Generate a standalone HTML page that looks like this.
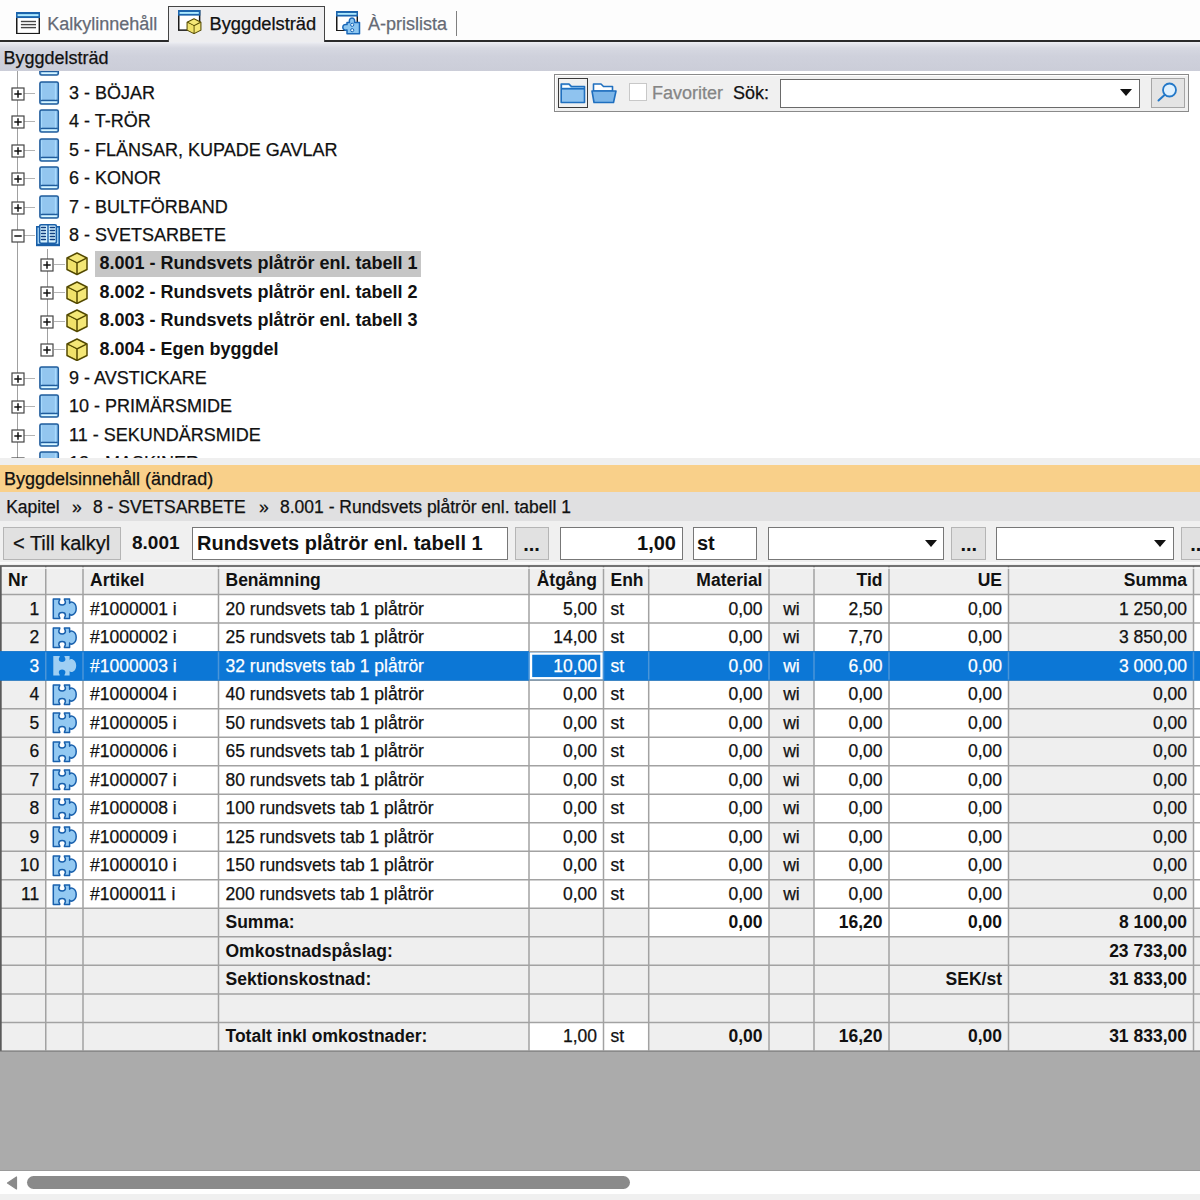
<!DOCTYPE html><html><head><meta charset="utf-8"><style>
html,body{margin:0;padding:0}
body{width:1200px;height:1200px;overflow:hidden;position:relative;background:#fff;font-family:"Liberation Sans",sans-serif;font-size:18px;color:#111}
.t{position:absolute;white-space:pre;line-height:20px;-webkit-text-stroke:0.25px currentColor}
</style></head><body>
<div style="position:absolute;box-sizing:border-box;left:0px;top:0px;width:1200px;height:41px;background:#fdfdfd"></div>
<div style="position:absolute;box-sizing:border-box;left:0px;top:40px;width:1200px;height:1.6px;background:#2a2a2a"></div>
<div style="position:absolute;box-sizing:border-box;left:168px;top:6px;width:157px;height:36px;background:#eeeef0;border:1.5px solid #444;border-bottom:none"></div>
<svg style="position:absolute;left:16.35px;top:12px" width="24.1" height="22.4" viewBox="0 0 24.1 22.4">
<rect x="0.75" y="0.75" width="22.6" height="20.9" fill="#fff" stroke="#1a1a1a" stroke-width="1.5"/>
<rect x="0" y="0" width="24.1" height="6.05" fill="#1b64ad"/>
<rect x="1.6" y="2.13" width="20.900000000000002" height="2.02" fill="#aeeaff"/>
</svg>
<svg style="position:absolute;left:0;top:0" width="60" height="40"><g stroke="#454545" stroke-width="1.4"><line x1="20.9" y1="21.5" x2="36" y2="21.5"/><line x1="20.9" y1="24.6" x2="36" y2="24.6"/><line x1="20.9" y1="27.6" x2="36" y2="27.6"/></g></svg>
<div class="t" style="left:47.2px;top:13.7px;color:#656a75">Kalkylinnehåll</div>
<svg style="position:absolute;left:178.35px;top:10.35px" width="22.4" height="20.9" viewBox="0 0 22.4 20.9">
<rect x="0.75" y="0.75" width="20.9" height="19.4" fill="#fff" stroke="#1a1a1a" stroke-width="1.5"/>
<rect x="0" y="0" width="22.4" height="5.64" fill="#1b64ad"/>
<rect x="1.6" y="1.99" width="19.2" height="1.88" fill="#aeeaff"/>
</svg>
<svg style="position:absolute;left:186.2px;top:17.8px" width="16" height="16.3" viewBox="0 0 22 23.5">
<path d="M11 1 L21 6 V17.5 L11 22.5 L1 17.5 V6 Z" fill="#f4e777" stroke="#544a00" stroke-width="1.5" stroke-linejoin="round"/>
<path d="M1.5 6.2 L11 11 L20.5 6.2 M11 11 V22" fill="none" stroke="#544a00" stroke-width="1.5"/>
<path d="M2.8 7.5 L10 11.2 V20.5 L2.8 17 Z" fill="#f1e26a"/>
</svg>
<div class="t" style="left:209.5px;top:13.7px;color:#111;font-size:18.3px">Byggdelsträd</div>
<svg style="position:absolute;left:336.2px;top:10.8px" width="22.1" height="20.5" viewBox="0 0 22.1 20.5">
<rect x="0.75" y="0.75" width="20.6" height="19.0" fill="#fff" stroke="#1a1a1a" stroke-width="1.5"/>
<rect x="0" y="0" width="22.1" height="5.54" fill="#1b64ad"/>
<rect x="1.6" y="1.95" width="18.900000000000002" height="1.84" fill="#aeeaff"/>
</svg>
<svg style="position:absolute;left:341px;top:16px" width="20" height="19" viewBox="0 0 20 19">
<path d="M6 6.5 H8.5 C8 4.5 8.5 2 11 2 C13.5 2 14 4.5 13.5 6.5 H18.5 V17.8 H6 V14 C3.5 14.5 1.8 13.5 1.8 11.3 C1.8 9 3.5 8 6 8.6 Z" fill="#8cc6f0" stroke="#1a68b8" stroke-width="1.5" stroke-linejoin="round"/>
<circle cx="11.2" cy="8.8" r="1.6" fill="#e6f5ff" stroke="#1a68b8" stroke-width="1"/>
<circle cx="11.2" cy="14.2" r="1.6" fill="#e6f5ff" stroke="#1a68b8" stroke-width="1"/>
</svg>
<div class="t" style="left:368px;top:13.7px;color:#656a75">À-prislista</div>
<div style="position:absolute;box-sizing:border-box;left:455.8px;top:10.6px;width:1.3px;height:25px;background:#808080"></div>
<div style="position:absolute;box-sizing:border-box;left:0px;top:41.6px;width:1200px;height:29.4px;background:linear-gradient(#eeeff3 0px,#e2e3ea 2.5px,#d6d8e1 6px,#cfd1dc 14px,#cbcdd8 29.4px)"></div>
<div class="t" style="left:3.5px;top:47.5px;color:#111">Byggdelsträd</div>
<div style="position:absolute;left:0;top:71px;width:1200px;height:386.5px;overflow:hidden;background:#fff">
<div style="position:absolute;box-sizing:border-box;left:16.6px;top:0px;width:1.4px;height:400px;background:#a0a0a0"></div>
<div style="position:absolute;box-sizing:border-box;left:46.6px;top:178.25px;width:1.4px;height:100.5px;background:#a0a0a0"></div>
<div style="position:absolute;box-sizing:border-box;left:94.75px;top:179.75px;width:326.25px;height:26px;background:#c6c6c6"></div>
<svg style="position:absolute;left:38.5px;top:-18.75px" width="21" height="25" viewBox="0 0 21 25">
<rect x="0.9" y="0.9" width="18.4" height="22.2" rx="1.6" fill="#93c6ef" stroke="#1f5c9c" stroke-width="1.5"/>
<line x1="1.5" y1="19.4" x2="18.8" y2="19.4" stroke="#1f5c9c" stroke-width="1.4"/>
<line x1="2.6" y1="21.3" x2="17.8" y2="21.3" stroke="#d8f6ff" stroke-width="1.5"/>
<line x1="16.4" y1="2.4" x2="16.4" y2="18.6" stroke="#a9dcff" stroke-width="1.1"/>
<line x1="2.6" y1="2.4" x2="2.6" y2="18.6" stroke="#a9dcff" stroke-width="1"/>
</svg>
<div class="t" style="left:69px;top:-16.95px;color:#111">2 - </div>
<div style="position:absolute;box-sizing:border-box;left:24px;top:21.85px;width:10.5px;height:1px;background:#b4b4b4"></div>
<svg style="position:absolute;left:9.5px;top:14.5px" width="16" height="16" viewBox="0 0 16 16">
<rect x="2" y="2" width="12" height="12" fill="#fff" stroke="#454545" stroke-width="1.2"/>
<line x1="4.3" y1="8" x2="11.7" y2="8" stroke="#111" stroke-width="1.5"/><line x1="8" y1="4.3" x2="8" y2="11.7" stroke="#111" stroke-width="1.5"/>
</svg>
<svg style="position:absolute;left:38.5px;top:9.75px" width="21" height="25" viewBox="0 0 21 25">
<rect x="0.9" y="0.9" width="18.4" height="22.2" rx="1.6" fill="#93c6ef" stroke="#1f5c9c" stroke-width="1.5"/>
<line x1="1.5" y1="19.4" x2="18.8" y2="19.4" stroke="#1f5c9c" stroke-width="1.4"/>
<line x1="2.6" y1="21.3" x2="17.8" y2="21.3" stroke="#d8f6ff" stroke-width="1.5"/>
<line x1="16.4" y1="2.4" x2="16.4" y2="18.6" stroke="#a9dcff" stroke-width="1.1"/>
<line x1="2.6" y1="2.4" x2="2.6" y2="18.6" stroke="#a9dcff" stroke-width="1"/>
</svg>
<div class="t" style="left:69px;top:11.55px;color:#111">3 - BÖJAR</div>
<div style="position:absolute;box-sizing:border-box;left:24px;top:50.35px;width:10.5px;height:1px;background:#b4b4b4"></div>
<svg style="position:absolute;left:9.5px;top:43.0px" width="16" height="16" viewBox="0 0 16 16">
<rect x="2" y="2" width="12" height="12" fill="#fff" stroke="#454545" stroke-width="1.2"/>
<line x1="4.3" y1="8" x2="11.7" y2="8" stroke="#111" stroke-width="1.5"/><line x1="8" y1="4.3" x2="8" y2="11.7" stroke="#111" stroke-width="1.5"/>
</svg>
<svg style="position:absolute;left:38.5px;top:38.25px" width="21" height="25" viewBox="0 0 21 25">
<rect x="0.9" y="0.9" width="18.4" height="22.2" rx="1.6" fill="#93c6ef" stroke="#1f5c9c" stroke-width="1.5"/>
<line x1="1.5" y1="19.4" x2="18.8" y2="19.4" stroke="#1f5c9c" stroke-width="1.4"/>
<line x1="2.6" y1="21.3" x2="17.8" y2="21.3" stroke="#d8f6ff" stroke-width="1.5"/>
<line x1="16.4" y1="2.4" x2="16.4" y2="18.6" stroke="#a9dcff" stroke-width="1.1"/>
<line x1="2.6" y1="2.4" x2="2.6" y2="18.6" stroke="#a9dcff" stroke-width="1"/>
</svg>
<div class="t" style="left:69px;top:40.05px;color:#111">4 - T-RÖR</div>
<div style="position:absolute;box-sizing:border-box;left:24px;top:78.85px;width:10.5px;height:1px;background:#b4b4b4"></div>
<svg style="position:absolute;left:9.5px;top:71.5px" width="16" height="16" viewBox="0 0 16 16">
<rect x="2" y="2" width="12" height="12" fill="#fff" stroke="#454545" stroke-width="1.2"/>
<line x1="4.3" y1="8" x2="11.7" y2="8" stroke="#111" stroke-width="1.5"/><line x1="8" y1="4.3" x2="8" y2="11.7" stroke="#111" stroke-width="1.5"/>
</svg>
<svg style="position:absolute;left:38.5px;top:66.75px" width="21" height="25" viewBox="0 0 21 25">
<rect x="0.9" y="0.9" width="18.4" height="22.2" rx="1.6" fill="#93c6ef" stroke="#1f5c9c" stroke-width="1.5"/>
<line x1="1.5" y1="19.4" x2="18.8" y2="19.4" stroke="#1f5c9c" stroke-width="1.4"/>
<line x1="2.6" y1="21.3" x2="17.8" y2="21.3" stroke="#d8f6ff" stroke-width="1.5"/>
<line x1="16.4" y1="2.4" x2="16.4" y2="18.6" stroke="#a9dcff" stroke-width="1.1"/>
<line x1="2.6" y1="2.4" x2="2.6" y2="18.6" stroke="#a9dcff" stroke-width="1"/>
</svg>
<div class="t" style="left:69px;top:68.55px;color:#111">5 - FLÄNSAR, KUPADE GAVLAR</div>
<div style="position:absolute;box-sizing:border-box;left:24px;top:107.35px;width:10.5px;height:1px;background:#b4b4b4"></div>
<svg style="position:absolute;left:9.5px;top:100.0px" width="16" height="16" viewBox="0 0 16 16">
<rect x="2" y="2" width="12" height="12" fill="#fff" stroke="#454545" stroke-width="1.2"/>
<line x1="4.3" y1="8" x2="11.7" y2="8" stroke="#111" stroke-width="1.5"/><line x1="8" y1="4.3" x2="8" y2="11.7" stroke="#111" stroke-width="1.5"/>
</svg>
<svg style="position:absolute;left:38.5px;top:95.25px" width="21" height="25" viewBox="0 0 21 25">
<rect x="0.9" y="0.9" width="18.4" height="22.2" rx="1.6" fill="#93c6ef" stroke="#1f5c9c" stroke-width="1.5"/>
<line x1="1.5" y1="19.4" x2="18.8" y2="19.4" stroke="#1f5c9c" stroke-width="1.4"/>
<line x1="2.6" y1="21.3" x2="17.8" y2="21.3" stroke="#d8f6ff" stroke-width="1.5"/>
<line x1="16.4" y1="2.4" x2="16.4" y2="18.6" stroke="#a9dcff" stroke-width="1.1"/>
<line x1="2.6" y1="2.4" x2="2.6" y2="18.6" stroke="#a9dcff" stroke-width="1"/>
</svg>
<div class="t" style="left:69px;top:97.05px;color:#111">6 - KONOR</div>
<div style="position:absolute;box-sizing:border-box;left:24px;top:135.85px;width:10.5px;height:1px;background:#b4b4b4"></div>
<svg style="position:absolute;left:9.5px;top:128.5px" width="16" height="16" viewBox="0 0 16 16">
<rect x="2" y="2" width="12" height="12" fill="#fff" stroke="#454545" stroke-width="1.2"/>
<line x1="4.3" y1="8" x2="11.7" y2="8" stroke="#111" stroke-width="1.5"/><line x1="8" y1="4.3" x2="8" y2="11.7" stroke="#111" stroke-width="1.5"/>
</svg>
<svg style="position:absolute;left:38.5px;top:123.75px" width="21" height="25" viewBox="0 0 21 25">
<rect x="0.9" y="0.9" width="18.4" height="22.2" rx="1.6" fill="#93c6ef" stroke="#1f5c9c" stroke-width="1.5"/>
<line x1="1.5" y1="19.4" x2="18.8" y2="19.4" stroke="#1f5c9c" stroke-width="1.4"/>
<line x1="2.6" y1="21.3" x2="17.8" y2="21.3" stroke="#d8f6ff" stroke-width="1.5"/>
<line x1="16.4" y1="2.4" x2="16.4" y2="18.6" stroke="#a9dcff" stroke-width="1.1"/>
<line x1="2.6" y1="2.4" x2="2.6" y2="18.6" stroke="#a9dcff" stroke-width="1"/>
</svg>
<div class="t" style="left:69px;top:125.55px;color:#111">7 - BULTFÖRBAND</div>
<div style="position:absolute;box-sizing:border-box;left:24px;top:164.35px;width:10.5px;height:1px;background:#b4b4b4"></div>
<svg style="position:absolute;left:9.5px;top:157.0px" width="16" height="16" viewBox="0 0 16 16">
<rect x="2" y="2" width="12" height="12" fill="#fff" stroke="#454545" stroke-width="1.2"/>
<line x1="4.3" y1="8" x2="11.7" y2="8" stroke="#111" stroke-width="1.5"/>
</svg>
<svg style="position:absolute;left:36px;top:152.75px" width="24" height="23" viewBox="0 0 24 23">
<rect x="0.8" y="2.8" width="22.4" height="18.6" fill="#b8e4ff" stroke="#1a5fa8" stroke-width="1.6"/>
<rect x="3.6" y="0.8" width="16.8" height="18.4" rx="1.5" fill="#d6f2ff" stroke="#1a5fa8" stroke-width="1.6"/>
<line x1="12" y1="1" x2="12" y2="21" stroke="#1a5fa8" stroke-width="1.4"/>
<line x1="0.8" y1="20.6" x2="23.2" y2="20.6" stroke="#1a5fa8" stroke-width="1.6"/>
<g stroke="#123f80" stroke-width="1.5" stroke-linecap="round"><line x1="5.6" y1="3.4" x2="9.4" y2="3.4"/><line x1="14.4" y1="3.4" x2="18.4" y2="3.4"/><line x1="5.6" y1="6.5" x2="9.4" y2="6.5"/><line x1="14.4" y1="6.5" x2="18.4" y2="6.5"/><line x1="5.6" y1="9.5" x2="9.4" y2="9.5"/><line x1="14.4" y1="9.5" x2="18.4" y2="9.5"/><line x1="5.6" y1="12.5" x2="9.4" y2="12.5"/><line x1="14.4" y1="12.5" x2="18.4" y2="12.5"/><line x1="5.6" y1="15.5" x2="9.4" y2="15.5"/><line x1="14.4" y1="15.5" x2="18.4" y2="15.5"/></g>
</svg>
<div class="t" style="left:69px;top:154.05px;color:#111">8 - SVETSARBETE</div>
<div style="position:absolute;box-sizing:border-box;left:54px;top:192.85px;width:11px;height:1px;background:#b4b4b4"></div>
<svg style="position:absolute;left:39.2px;top:185.5px" width="16" height="16" viewBox="0 0 16 16">
<rect x="2" y="2" width="12" height="12" fill="#fff" stroke="#454545" stroke-width="1.2"/>
<line x1="4.3" y1="8" x2="11.7" y2="8" stroke="#111" stroke-width="1.5"/><line x1="8" y1="4.3" x2="8" y2="11.7" stroke="#111" stroke-width="1.5"/>
</svg>
<svg style="position:absolute;left:66px;top:181.25px" width="22" height="23.5" viewBox="0 0 22 23.5">
<path d="M11 1 L21 6 V17.5 L11 22.5 L1 17.5 V6 Z" fill="#f4e777" stroke="#544a00" stroke-width="1.5" stroke-linejoin="round"/>
<path d="M1.5 6.2 L11 11 L20.5 6.2 M11 11 V22" fill="none" stroke="#544a00" stroke-width="1.5"/>
<path d="M2.8 7.5 L10 11.2 V20.5 L2.8 17 Z" fill="#f1e26a"/>
</svg>
<div class="t" style="left:99.5px;top:182.35px;color:#111;font-weight:bold;-webkit-text-stroke:0">8.001 - Rundsvets plåtrör enl. tabell 1</div>
<div style="position:absolute;box-sizing:border-box;left:54px;top:221.35px;width:11px;height:1px;background:#b4b4b4"></div>
<svg style="position:absolute;left:39.2px;top:214.0px" width="16" height="16" viewBox="0 0 16 16">
<rect x="2" y="2" width="12" height="12" fill="#fff" stroke="#454545" stroke-width="1.2"/>
<line x1="4.3" y1="8" x2="11.7" y2="8" stroke="#111" stroke-width="1.5"/><line x1="8" y1="4.3" x2="8" y2="11.7" stroke="#111" stroke-width="1.5"/>
</svg>
<svg style="position:absolute;left:66px;top:209.75px" width="22" height="23.5" viewBox="0 0 22 23.5">
<path d="M11 1 L21 6 V17.5 L11 22.5 L1 17.5 V6 Z" fill="#f4e777" stroke="#544a00" stroke-width="1.5" stroke-linejoin="round"/>
<path d="M1.5 6.2 L11 11 L20.5 6.2 M11 11 V22" fill="none" stroke="#544a00" stroke-width="1.5"/>
<path d="M2.8 7.5 L10 11.2 V20.5 L2.8 17 Z" fill="#f1e26a"/>
</svg>
<div class="t" style="left:99.5px;top:210.85px;color:#111;font-weight:bold;-webkit-text-stroke:0">8.002 - Rundsvets plåtrör enl. tabell 2</div>
<div style="position:absolute;box-sizing:border-box;left:54px;top:249.85px;width:11px;height:1px;background:#b4b4b4"></div>
<svg style="position:absolute;left:39.2px;top:242.5px" width="16" height="16" viewBox="0 0 16 16">
<rect x="2" y="2" width="12" height="12" fill="#fff" stroke="#454545" stroke-width="1.2"/>
<line x1="4.3" y1="8" x2="11.7" y2="8" stroke="#111" stroke-width="1.5"/><line x1="8" y1="4.3" x2="8" y2="11.7" stroke="#111" stroke-width="1.5"/>
</svg>
<svg style="position:absolute;left:66px;top:238.25px" width="22" height="23.5" viewBox="0 0 22 23.5">
<path d="M11 1 L21 6 V17.5 L11 22.5 L1 17.5 V6 Z" fill="#f4e777" stroke="#544a00" stroke-width="1.5" stroke-linejoin="round"/>
<path d="M1.5 6.2 L11 11 L20.5 6.2 M11 11 V22" fill="none" stroke="#544a00" stroke-width="1.5"/>
<path d="M2.8 7.5 L10 11.2 V20.5 L2.8 17 Z" fill="#f1e26a"/>
</svg>
<div class="t" style="left:99.5px;top:239.35px;color:#111;font-weight:bold;-webkit-text-stroke:0">8.003 - Rundsvets plåtrör enl. tabell 3</div>
<div style="position:absolute;box-sizing:border-box;left:54px;top:278.35px;width:11px;height:1px;background:#b4b4b4"></div>
<svg style="position:absolute;left:39.2px;top:271.0px" width="16" height="16" viewBox="0 0 16 16">
<rect x="2" y="2" width="12" height="12" fill="#fff" stroke="#454545" stroke-width="1.2"/>
<line x1="4.3" y1="8" x2="11.7" y2="8" stroke="#111" stroke-width="1.5"/><line x1="8" y1="4.3" x2="8" y2="11.7" stroke="#111" stroke-width="1.5"/>
</svg>
<svg style="position:absolute;left:66px;top:266.75px" width="22" height="23.5" viewBox="0 0 22 23.5">
<path d="M11 1 L21 6 V17.5 L11 22.5 L1 17.5 V6 Z" fill="#f4e777" stroke="#544a00" stroke-width="1.5" stroke-linejoin="round"/>
<path d="M1.5 6.2 L11 11 L20.5 6.2 M11 11 V22" fill="none" stroke="#544a00" stroke-width="1.5"/>
<path d="M2.8 7.5 L10 11.2 V20.5 L2.8 17 Z" fill="#f1e26a"/>
</svg>
<div class="t" style="left:99.5px;top:267.85px;color:#111;font-weight:bold;-webkit-text-stroke:0">8.004 - Egen byggdel</div>
<div style="position:absolute;box-sizing:border-box;left:24px;top:306.85px;width:10.5px;height:1px;background:#b4b4b4"></div>
<svg style="position:absolute;left:9.5px;top:299.5px" width="16" height="16" viewBox="0 0 16 16">
<rect x="2" y="2" width="12" height="12" fill="#fff" stroke="#454545" stroke-width="1.2"/>
<line x1="4.3" y1="8" x2="11.7" y2="8" stroke="#111" stroke-width="1.5"/><line x1="8" y1="4.3" x2="8" y2="11.7" stroke="#111" stroke-width="1.5"/>
</svg>
<svg style="position:absolute;left:38.5px;top:294.75px" width="21" height="25" viewBox="0 0 21 25">
<rect x="0.9" y="0.9" width="18.4" height="22.2" rx="1.6" fill="#93c6ef" stroke="#1f5c9c" stroke-width="1.5"/>
<line x1="1.5" y1="19.4" x2="18.8" y2="19.4" stroke="#1f5c9c" stroke-width="1.4"/>
<line x1="2.6" y1="21.3" x2="17.8" y2="21.3" stroke="#d8f6ff" stroke-width="1.5"/>
<line x1="16.4" y1="2.4" x2="16.4" y2="18.6" stroke="#a9dcff" stroke-width="1.1"/>
<line x1="2.6" y1="2.4" x2="2.6" y2="18.6" stroke="#a9dcff" stroke-width="1"/>
</svg>
<div class="t" style="left:69px;top:296.55px;color:#111">9 - AVSTICKARE</div>
<div style="position:absolute;box-sizing:border-box;left:24px;top:335.35px;width:10.5px;height:1px;background:#b4b4b4"></div>
<svg style="position:absolute;left:9.5px;top:328.0px" width="16" height="16" viewBox="0 0 16 16">
<rect x="2" y="2" width="12" height="12" fill="#fff" stroke="#454545" stroke-width="1.2"/>
<line x1="4.3" y1="8" x2="11.7" y2="8" stroke="#111" stroke-width="1.5"/><line x1="8" y1="4.3" x2="8" y2="11.7" stroke="#111" stroke-width="1.5"/>
</svg>
<svg style="position:absolute;left:38.5px;top:323.25px" width="21" height="25" viewBox="0 0 21 25">
<rect x="0.9" y="0.9" width="18.4" height="22.2" rx="1.6" fill="#93c6ef" stroke="#1f5c9c" stroke-width="1.5"/>
<line x1="1.5" y1="19.4" x2="18.8" y2="19.4" stroke="#1f5c9c" stroke-width="1.4"/>
<line x1="2.6" y1="21.3" x2="17.8" y2="21.3" stroke="#d8f6ff" stroke-width="1.5"/>
<line x1="16.4" y1="2.4" x2="16.4" y2="18.6" stroke="#a9dcff" stroke-width="1.1"/>
<line x1="2.6" y1="2.4" x2="2.6" y2="18.6" stroke="#a9dcff" stroke-width="1"/>
</svg>
<div class="t" style="left:69px;top:325.05px;color:#111">10 - PRIMÄRSMIDE</div>
<div style="position:absolute;box-sizing:border-box;left:24px;top:363.85px;width:10.5px;height:1px;background:#b4b4b4"></div>
<svg style="position:absolute;left:9.5px;top:356.5px" width="16" height="16" viewBox="0 0 16 16">
<rect x="2" y="2" width="12" height="12" fill="#fff" stroke="#454545" stroke-width="1.2"/>
<line x1="4.3" y1="8" x2="11.7" y2="8" stroke="#111" stroke-width="1.5"/><line x1="8" y1="4.3" x2="8" y2="11.7" stroke="#111" stroke-width="1.5"/>
</svg>
<svg style="position:absolute;left:38.5px;top:351.75px" width="21" height="25" viewBox="0 0 21 25">
<rect x="0.9" y="0.9" width="18.4" height="22.2" rx="1.6" fill="#93c6ef" stroke="#1f5c9c" stroke-width="1.5"/>
<line x1="1.5" y1="19.4" x2="18.8" y2="19.4" stroke="#1f5c9c" stroke-width="1.4"/>
<line x1="2.6" y1="21.3" x2="17.8" y2="21.3" stroke="#d8f6ff" stroke-width="1.5"/>
<line x1="16.4" y1="2.4" x2="16.4" y2="18.6" stroke="#a9dcff" stroke-width="1.1"/>
<line x1="2.6" y1="2.4" x2="2.6" y2="18.6" stroke="#a9dcff" stroke-width="1"/>
</svg>
<div class="t" style="left:69px;top:353.55px;color:#111">11 - SEKUNDÄRSMIDE</div>
<div style="position:absolute;box-sizing:border-box;left:24px;top:392.35px;width:10.5px;height:1px;background:#b4b4b4"></div>
<svg style="position:absolute;left:9.5px;top:385.0px" width="16" height="16" viewBox="0 0 16 16">
<rect x="2" y="2" width="12" height="12" fill="#fff" stroke="#454545" stroke-width="1.2"/>
<line x1="4.3" y1="8" x2="11.7" y2="8" stroke="#111" stroke-width="1.5"/><line x1="8" y1="4.3" x2="8" y2="11.7" stroke="#111" stroke-width="1.5"/>
</svg>
<svg style="position:absolute;left:38.5px;top:380.25px" width="21" height="25" viewBox="0 0 21 25">
<rect x="0.9" y="0.9" width="18.4" height="22.2" rx="1.6" fill="#93c6ef" stroke="#1f5c9c" stroke-width="1.5"/>
<line x1="1.5" y1="19.4" x2="18.8" y2="19.4" stroke="#1f5c9c" stroke-width="1.4"/>
<line x1="2.6" y1="21.3" x2="17.8" y2="21.3" stroke="#d8f6ff" stroke-width="1.5"/>
<line x1="16.4" y1="2.4" x2="16.4" y2="18.6" stroke="#a9dcff" stroke-width="1.1"/>
<line x1="2.6" y1="2.4" x2="2.6" y2="18.6" stroke="#a9dcff" stroke-width="1"/>
</svg>
<div class="t" style="left:69px;top:382.05px;color:#111">12 - MASKINER</div>
</div>
<div style="position:absolute;box-sizing:border-box;left:553.5px;top:73.8px;width:635px;height:38.4px;background:#f0f0f0;border:1.2px solid #8a8a8a;box-shadow:inset 1px 1px 0 #fff"></div>
<div style="position:absolute;box-sizing:border-box;left:558px;top:78px;width:30px;height:29.5px;border:1.6px solid #3a3a3a;background:#f0f0f0"></div>
<svg style="position:absolute;left:560px;top:82px" width="26" height="22" viewBox="0 0 26 22">
<path d="M1.2 2 H9 L11.5 4.5 H24.5 V20.5 H1.2 Z" fill="#8fc3ef" stroke="#1f6fbf" stroke-width="1.6" stroke-linejoin="round"/>
<path d="M1.2 6.8 H24.5" stroke="#1f6fbf" stroke-width="1.6"/>
<path d="M2.4 3.2 H8.6 L10.6 5.6 H2.4 Z" fill="#fff"/>
</svg>
<svg style="position:absolute;left:591px;top:82px" width="26" height="22" viewBox="0 0 26 22">
<path d="M2.5 2 H10 L12.5 4.5 H21.5 V9 H2.5 Z" fill="#fff" stroke="#1f6fbf" stroke-width="1.6" stroke-linejoin="round"/>
<path d="M1 9 H25 L22.5 20.5 H3 Z" fill="#7db6e8" stroke="#1f6fbf" stroke-width="1.6" stroke-linejoin="round"/>
</svg>
<div style="position:absolute;box-sizing:border-box;left:629px;top:83px;width:18px;height:18px;background:#fff;border:1px solid #c8c8c8"></div>
<div class="t" style="left:652px;top:82.5px;color:#858585">Favoriter</div>
<div class="t" style="left:733px;top:82.5px;color:#111">Sök:</div>
<div style="position:absolute;box-sizing:border-box;left:780px;top:78.5px;width:359.5px;height:29px;background:#fff;border:1.5px solid #6a6a6a"></div>
<svg style="position:absolute;left:1119px;top:88px" width="14" height="9" viewBox="0 0 14 9"><path d="M1 1 H13 L7 8 Z" fill="#111"/></svg>
<div style="position:absolute;box-sizing:border-box;left:1151px;top:78px;width:34px;height:29.5px;background:#e4e4e4;border:1.3px solid #a6a6a6"></div>
<svg style="position:absolute;left:1154px;top:81px" width="28" height="24" viewBox="0 0 28 24"><circle cx="15.5" cy="9" r="6.5" fill="#dff1ff" stroke="#2378c8" stroke-width="1.8"/><line x1="10.8" y1="13.8" x2="4.5" y2="19.5" stroke="#2378c8" stroke-width="2" stroke-linecap="round"/></svg>
<div style="position:absolute;box-sizing:border-box;left:0px;top:457.5px;width:1200px;height:7.5px;background:#efefef"></div>
<div style="position:absolute;box-sizing:border-box;left:0px;top:465px;width:1200px;height:27px;background:#f9d08a"></div>
<div class="t" style="left:4px;top:468.5px;color:#111">Byggdelsinnehåll (ändrad)</div>
<div style="position:absolute;box-sizing:border-box;left:0px;top:492px;width:1200px;height:29px;background:#e0e0e1"></div>
<div class="t" style="left:6.2px;top:496.5px;color:#111;font-size:17.5px">Kapitel</div>
<div class="t" style="left:72px;top:496.5px;color:#111;font-size:17.5px">»</div>
<div class="t" style="left:93px;top:496.5px;color:#111;font-size:17.5px">8 - SVETSARBETE</div>
<div class="t" style="left:259px;top:496.5px;color:#111;font-size:17.5px">»</div>
<div class="t" style="left:280px;top:496.5px;color:#111;font-size:17.5px">8.001 - Rundsvets plåtrör enl. tabell 1</div>
<div style="position:absolute;box-sizing:border-box;left:0px;top:520.5px;width:1200px;height:46px;background:#f0f0f0"></div>
<div style="position:absolute;box-sizing:border-box;left:3.3px;top:527px;width:117.7px;height:33.3px;background:#e1e1e1;border:1.3px solid #b5b5b5"></div>
<div class="t" style="left:13px;top:532.5px;color:#111;font-size:20px">< Till kalkyl</div>
<div class="t" style="left:132px;top:533px;color:#111;font-weight:bold;-webkit-text-stroke:0;font-size:19px">8.001</div>
<div style="position:absolute;box-sizing:border-box;left:192px;top:527.2px;width:316px;height:33.3px;background:#fff;border:1.5px solid #777"></div>
<div class="t" style="left:197px;top:533px;color:#111;font-weight:bold;-webkit-text-stroke:0;font-size:20px">Rundsvets plåtrör enl. tabell 1</div>
<div style="position:absolute;box-sizing:border-box;left:514.5px;top:527px;width:34px;height:33.3px;background:#e1e1e1;border:1.3px solid #b5b5b5"></div>
<div class="t" style="left:514.5px;top:533.6px;width:34px;text-align:center;font-size:20px;font-weight:bold;-webkit-text-stroke:0">...</div>
<div style="position:absolute;box-sizing:border-box;left:560px;top:527px;width:122.7px;height:33.3px;background:#fff;border:1.5px solid #777"></div>
<div class="t" style="left:560px;top:533px;width:116px;text-align:right;font-weight:bold;-webkit-text-stroke:0;font-size:20px">1,00</div>
<div style="position:absolute;box-sizing:border-box;left:693px;top:527px;width:64px;height:33.3px;background:#fff;border:1.5px solid #777"></div>
<div class="t" style="left:697px;top:533px;color:#111;font-weight:bold;-webkit-text-stroke:0;font-size:20px">st</div>
<div style="position:absolute;box-sizing:border-box;left:768px;top:527px;width:176.3px;height:33.3px;background:#fff;border:1.5px solid #777"></div>
<svg style="position:absolute;left:924px;top:539px" width="14" height="9" viewBox="0 0 14 9"><path d="M1 1 H13 L7 8 Z" fill="#111"/></svg>
<div style="position:absolute;box-sizing:border-box;left:951px;top:527px;width:34.5px;height:33.3px;background:#e1e1e1;border:1.3px solid #b5b5b5"></div>
<div class="t" style="left:951.5px;top:533.6px;width:34.5px;text-align:center;font-size:20px;font-weight:bold;-webkit-text-stroke:0">...</div>
<div style="position:absolute;box-sizing:border-box;left:996.3px;top:527px;width:177.7px;height:33.3px;background:#fff;border:1.5px solid #777"></div>
<svg style="position:absolute;left:1153px;top:539px" width="14" height="9" viewBox="0 0 14 9"><path d="M1 1 H13 L7 8 Z" fill="#111"/></svg>
<div style="position:absolute;box-sizing:border-box;left:1181.4px;top:527px;width:40px;height:33.3px;background:#e1e1e1;border:1.3px solid #b5b5b5"></div>
<div class="t" style="left:1181.4px;top:533.6px;width:34.5px;text-align:center;font-size:20px;font-weight:bold;-webkit-text-stroke:0">...</div>
<div style="position:absolute;box-sizing:border-box;left:0px;top:566px;width:1200px;height:485.5px;background:#efefef"></div>
<div style="position:absolute;left:1.00px;top:594.60px;width:44.75px;height:28.52px;background:#efefef"></div>
<div style="position:absolute;left:45.75px;top:594.60px;width:37.25px;height:28.52px;background:#fff"></div>
<div style="position:absolute;left:83.00px;top:594.60px;width:135.50px;height:28.52px;background:#fff"></div>
<div style="position:absolute;left:218.50px;top:594.60px;width:310.50px;height:28.52px;background:#fff"></div>
<div style="position:absolute;left:529.00px;top:594.60px;width:74.50px;height:28.52px;background:#fff"></div>
<div style="position:absolute;left:603.50px;top:594.60px;width:45.20px;height:28.52px;background:#fff"></div>
<div style="position:absolute;left:648.70px;top:594.60px;width:120.30px;height:28.52px;background:#fff"></div>
<div style="position:absolute;left:769.00px;top:594.60px;width:45.00px;height:28.52px;background:#efefef"></div>
<div style="position:absolute;left:814.00px;top:594.60px;width:75.00px;height:28.52px;background:#fff"></div>
<div style="position:absolute;left:889.00px;top:594.60px;width:119.50px;height:28.52px;background:#fff"></div>
<div style="position:absolute;left:1008.50px;top:594.60px;width:185.00px;height:28.52px;background:#efefef"></div>
<div style="position:absolute;left:1193.50px;top:594.60px;width:66.50px;height:28.52px;background:#fff"></div>
<div style="position:absolute;left:1.00px;top:623.12px;width:44.75px;height:28.52px;background:#efefef"></div>
<div style="position:absolute;left:45.75px;top:623.12px;width:37.25px;height:28.52px;background:#fff"></div>
<div style="position:absolute;left:83.00px;top:623.12px;width:135.50px;height:28.52px;background:#fff"></div>
<div style="position:absolute;left:218.50px;top:623.12px;width:310.50px;height:28.52px;background:#fff"></div>
<div style="position:absolute;left:529.00px;top:623.12px;width:74.50px;height:28.52px;background:#fff"></div>
<div style="position:absolute;left:603.50px;top:623.12px;width:45.20px;height:28.52px;background:#fff"></div>
<div style="position:absolute;left:648.70px;top:623.12px;width:120.30px;height:28.52px;background:#fff"></div>
<div style="position:absolute;left:769.00px;top:623.12px;width:45.00px;height:28.52px;background:#efefef"></div>
<div style="position:absolute;left:814.00px;top:623.12px;width:75.00px;height:28.52px;background:#fff"></div>
<div style="position:absolute;left:889.00px;top:623.12px;width:119.50px;height:28.52px;background:#fff"></div>
<div style="position:absolute;left:1008.50px;top:623.12px;width:185.00px;height:28.52px;background:#efefef"></div>
<div style="position:absolute;left:1193.50px;top:623.12px;width:66.50px;height:28.52px;background:#fff"></div>
<div style="position:absolute;left:0;top:651.64px;width:1200px;height:28.52px;background:#0c77d6"></div>
<div style="position:absolute;left:1.00px;top:680.16px;width:44.75px;height:28.52px;background:#efefef"></div>
<div style="position:absolute;left:45.75px;top:680.16px;width:37.25px;height:28.52px;background:#fff"></div>
<div style="position:absolute;left:83.00px;top:680.16px;width:135.50px;height:28.52px;background:#fff"></div>
<div style="position:absolute;left:218.50px;top:680.16px;width:310.50px;height:28.52px;background:#fff"></div>
<div style="position:absolute;left:529.00px;top:680.16px;width:74.50px;height:28.52px;background:#fff"></div>
<div style="position:absolute;left:603.50px;top:680.16px;width:45.20px;height:28.52px;background:#fff"></div>
<div style="position:absolute;left:648.70px;top:680.16px;width:120.30px;height:28.52px;background:#fff"></div>
<div style="position:absolute;left:769.00px;top:680.16px;width:45.00px;height:28.52px;background:#efefef"></div>
<div style="position:absolute;left:814.00px;top:680.16px;width:75.00px;height:28.52px;background:#fff"></div>
<div style="position:absolute;left:889.00px;top:680.16px;width:119.50px;height:28.52px;background:#fff"></div>
<div style="position:absolute;left:1008.50px;top:680.16px;width:185.00px;height:28.52px;background:#efefef"></div>
<div style="position:absolute;left:1193.50px;top:680.16px;width:66.50px;height:28.52px;background:#fff"></div>
<div style="position:absolute;left:1.00px;top:708.68px;width:44.75px;height:28.52px;background:#efefef"></div>
<div style="position:absolute;left:45.75px;top:708.68px;width:37.25px;height:28.52px;background:#fff"></div>
<div style="position:absolute;left:83.00px;top:708.68px;width:135.50px;height:28.52px;background:#fff"></div>
<div style="position:absolute;left:218.50px;top:708.68px;width:310.50px;height:28.52px;background:#fff"></div>
<div style="position:absolute;left:529.00px;top:708.68px;width:74.50px;height:28.52px;background:#fff"></div>
<div style="position:absolute;left:603.50px;top:708.68px;width:45.20px;height:28.52px;background:#fff"></div>
<div style="position:absolute;left:648.70px;top:708.68px;width:120.30px;height:28.52px;background:#fff"></div>
<div style="position:absolute;left:769.00px;top:708.68px;width:45.00px;height:28.52px;background:#efefef"></div>
<div style="position:absolute;left:814.00px;top:708.68px;width:75.00px;height:28.52px;background:#fff"></div>
<div style="position:absolute;left:889.00px;top:708.68px;width:119.50px;height:28.52px;background:#fff"></div>
<div style="position:absolute;left:1008.50px;top:708.68px;width:185.00px;height:28.52px;background:#efefef"></div>
<div style="position:absolute;left:1193.50px;top:708.68px;width:66.50px;height:28.52px;background:#fff"></div>
<div style="position:absolute;left:1.00px;top:737.20px;width:44.75px;height:28.52px;background:#efefef"></div>
<div style="position:absolute;left:45.75px;top:737.20px;width:37.25px;height:28.52px;background:#fff"></div>
<div style="position:absolute;left:83.00px;top:737.20px;width:135.50px;height:28.52px;background:#fff"></div>
<div style="position:absolute;left:218.50px;top:737.20px;width:310.50px;height:28.52px;background:#fff"></div>
<div style="position:absolute;left:529.00px;top:737.20px;width:74.50px;height:28.52px;background:#fff"></div>
<div style="position:absolute;left:603.50px;top:737.20px;width:45.20px;height:28.52px;background:#fff"></div>
<div style="position:absolute;left:648.70px;top:737.20px;width:120.30px;height:28.52px;background:#fff"></div>
<div style="position:absolute;left:769.00px;top:737.20px;width:45.00px;height:28.52px;background:#efefef"></div>
<div style="position:absolute;left:814.00px;top:737.20px;width:75.00px;height:28.52px;background:#fff"></div>
<div style="position:absolute;left:889.00px;top:737.20px;width:119.50px;height:28.52px;background:#fff"></div>
<div style="position:absolute;left:1008.50px;top:737.20px;width:185.00px;height:28.52px;background:#efefef"></div>
<div style="position:absolute;left:1193.50px;top:737.20px;width:66.50px;height:28.52px;background:#fff"></div>
<div style="position:absolute;left:1.00px;top:765.72px;width:44.75px;height:28.52px;background:#efefef"></div>
<div style="position:absolute;left:45.75px;top:765.72px;width:37.25px;height:28.52px;background:#fff"></div>
<div style="position:absolute;left:83.00px;top:765.72px;width:135.50px;height:28.52px;background:#fff"></div>
<div style="position:absolute;left:218.50px;top:765.72px;width:310.50px;height:28.52px;background:#fff"></div>
<div style="position:absolute;left:529.00px;top:765.72px;width:74.50px;height:28.52px;background:#fff"></div>
<div style="position:absolute;left:603.50px;top:765.72px;width:45.20px;height:28.52px;background:#fff"></div>
<div style="position:absolute;left:648.70px;top:765.72px;width:120.30px;height:28.52px;background:#fff"></div>
<div style="position:absolute;left:769.00px;top:765.72px;width:45.00px;height:28.52px;background:#efefef"></div>
<div style="position:absolute;left:814.00px;top:765.72px;width:75.00px;height:28.52px;background:#fff"></div>
<div style="position:absolute;left:889.00px;top:765.72px;width:119.50px;height:28.52px;background:#fff"></div>
<div style="position:absolute;left:1008.50px;top:765.72px;width:185.00px;height:28.52px;background:#efefef"></div>
<div style="position:absolute;left:1193.50px;top:765.72px;width:66.50px;height:28.52px;background:#fff"></div>
<div style="position:absolute;left:1.00px;top:794.24px;width:44.75px;height:28.52px;background:#efefef"></div>
<div style="position:absolute;left:45.75px;top:794.24px;width:37.25px;height:28.52px;background:#fff"></div>
<div style="position:absolute;left:83.00px;top:794.24px;width:135.50px;height:28.52px;background:#fff"></div>
<div style="position:absolute;left:218.50px;top:794.24px;width:310.50px;height:28.52px;background:#fff"></div>
<div style="position:absolute;left:529.00px;top:794.24px;width:74.50px;height:28.52px;background:#fff"></div>
<div style="position:absolute;left:603.50px;top:794.24px;width:45.20px;height:28.52px;background:#fff"></div>
<div style="position:absolute;left:648.70px;top:794.24px;width:120.30px;height:28.52px;background:#fff"></div>
<div style="position:absolute;left:769.00px;top:794.24px;width:45.00px;height:28.52px;background:#efefef"></div>
<div style="position:absolute;left:814.00px;top:794.24px;width:75.00px;height:28.52px;background:#fff"></div>
<div style="position:absolute;left:889.00px;top:794.24px;width:119.50px;height:28.52px;background:#fff"></div>
<div style="position:absolute;left:1008.50px;top:794.24px;width:185.00px;height:28.52px;background:#efefef"></div>
<div style="position:absolute;left:1193.50px;top:794.24px;width:66.50px;height:28.52px;background:#fff"></div>
<div style="position:absolute;left:1.00px;top:822.76px;width:44.75px;height:28.52px;background:#efefef"></div>
<div style="position:absolute;left:45.75px;top:822.76px;width:37.25px;height:28.52px;background:#fff"></div>
<div style="position:absolute;left:83.00px;top:822.76px;width:135.50px;height:28.52px;background:#fff"></div>
<div style="position:absolute;left:218.50px;top:822.76px;width:310.50px;height:28.52px;background:#fff"></div>
<div style="position:absolute;left:529.00px;top:822.76px;width:74.50px;height:28.52px;background:#fff"></div>
<div style="position:absolute;left:603.50px;top:822.76px;width:45.20px;height:28.52px;background:#fff"></div>
<div style="position:absolute;left:648.70px;top:822.76px;width:120.30px;height:28.52px;background:#fff"></div>
<div style="position:absolute;left:769.00px;top:822.76px;width:45.00px;height:28.52px;background:#efefef"></div>
<div style="position:absolute;left:814.00px;top:822.76px;width:75.00px;height:28.52px;background:#fff"></div>
<div style="position:absolute;left:889.00px;top:822.76px;width:119.50px;height:28.52px;background:#fff"></div>
<div style="position:absolute;left:1008.50px;top:822.76px;width:185.00px;height:28.52px;background:#efefef"></div>
<div style="position:absolute;left:1193.50px;top:822.76px;width:66.50px;height:28.52px;background:#fff"></div>
<div style="position:absolute;left:1.00px;top:851.28px;width:44.75px;height:28.52px;background:#efefef"></div>
<div style="position:absolute;left:45.75px;top:851.28px;width:37.25px;height:28.52px;background:#fff"></div>
<div style="position:absolute;left:83.00px;top:851.28px;width:135.50px;height:28.52px;background:#fff"></div>
<div style="position:absolute;left:218.50px;top:851.28px;width:310.50px;height:28.52px;background:#fff"></div>
<div style="position:absolute;left:529.00px;top:851.28px;width:74.50px;height:28.52px;background:#fff"></div>
<div style="position:absolute;left:603.50px;top:851.28px;width:45.20px;height:28.52px;background:#fff"></div>
<div style="position:absolute;left:648.70px;top:851.28px;width:120.30px;height:28.52px;background:#fff"></div>
<div style="position:absolute;left:769.00px;top:851.28px;width:45.00px;height:28.52px;background:#efefef"></div>
<div style="position:absolute;left:814.00px;top:851.28px;width:75.00px;height:28.52px;background:#fff"></div>
<div style="position:absolute;left:889.00px;top:851.28px;width:119.50px;height:28.52px;background:#fff"></div>
<div style="position:absolute;left:1008.50px;top:851.28px;width:185.00px;height:28.52px;background:#efefef"></div>
<div style="position:absolute;left:1193.50px;top:851.28px;width:66.50px;height:28.52px;background:#fff"></div>
<div style="position:absolute;left:1.00px;top:879.80px;width:44.75px;height:28.52px;background:#efefef"></div>
<div style="position:absolute;left:45.75px;top:879.80px;width:37.25px;height:28.52px;background:#fff"></div>
<div style="position:absolute;left:83.00px;top:879.80px;width:135.50px;height:28.52px;background:#fff"></div>
<div style="position:absolute;left:218.50px;top:879.80px;width:310.50px;height:28.52px;background:#fff"></div>
<div style="position:absolute;left:529.00px;top:879.80px;width:74.50px;height:28.52px;background:#fff"></div>
<div style="position:absolute;left:603.50px;top:879.80px;width:45.20px;height:28.52px;background:#fff"></div>
<div style="position:absolute;left:648.70px;top:879.80px;width:120.30px;height:28.52px;background:#fff"></div>
<div style="position:absolute;left:769.00px;top:879.80px;width:45.00px;height:28.52px;background:#efefef"></div>
<div style="position:absolute;left:814.00px;top:879.80px;width:75.00px;height:28.52px;background:#fff"></div>
<div style="position:absolute;left:889.00px;top:879.80px;width:119.50px;height:28.52px;background:#fff"></div>
<div style="position:absolute;left:1008.50px;top:879.80px;width:185.00px;height:28.52px;background:#efefef"></div>
<div style="position:absolute;left:1193.50px;top:879.80px;width:66.50px;height:28.52px;background:#fff"></div>
<div style="position:absolute;left:648.70px;top:908.32px;width:120.30px;height:28.52px;background:#fff"></div>
<div style="position:absolute;left:814.00px;top:908.32px;width:75.00px;height:28.52px;background:#fff"></div>
<div style="position:absolute;left:889.00px;top:908.32px;width:119.50px;height:28.52px;background:#fff"></div>
<div style="position:absolute;left:529.00px;top:1022.40px;width:74.50px;height:28.52px;background:#fff"></div>
<div style="position:absolute;left:603.50px;top:1022.40px;width:45.20px;height:28.52px;background:#fff"></div>
<svg style="position:absolute;left:0;top:0" width="1200" height="1200"><line x1="45.75" y1="566" x2="45.75" y2="1050.92" stroke="#a2a2a2" stroke-width="1.5"/><line x1="83" y1="566" x2="83" y2="1050.92" stroke="#a2a2a2" stroke-width="1.5"/><line x1="218.5" y1="566" x2="218.5" y2="1050.92" stroke="#a2a2a2" stroke-width="1.5"/><line x1="529" y1="566" x2="529" y2="1050.92" stroke="#a2a2a2" stroke-width="1.5"/><line x1="603.5" y1="566" x2="603.5" y2="1050.92" stroke="#a2a2a2" stroke-width="1.5"/><line x1="648.7" y1="566" x2="648.7" y2="1050.92" stroke="#a2a2a2" stroke-width="1.5"/><line x1="769" y1="566" x2="769" y2="1050.92" stroke="#a2a2a2" stroke-width="1.5"/><line x1="814" y1="566" x2="814" y2="1050.92" stroke="#a2a2a2" stroke-width="1.5"/><line x1="889" y1="566" x2="889" y2="1050.92" stroke="#a2a2a2" stroke-width="1.5"/><line x1="1008.5" y1="566" x2="1008.5" y2="1050.92" stroke="#a2a2a2" stroke-width="1.5"/><line x1="1193.5" y1="566" x2="1193.5" y2="1050.92" stroke="#a2a2a2" stroke-width="1.5"/><line x1="0" y1="594.60" x2="1200" y2="594.60" stroke="#a2a2a2" stroke-width="1.5"/><line x1="0" y1="623.12" x2="1200" y2="623.12" stroke="#a2a2a2" stroke-width="1.5"/><line x1="0" y1="651.64" x2="1200" y2="651.64" stroke="#a2a2a2" stroke-width="1.5"/><line x1="0" y1="680.16" x2="1200" y2="680.16" stroke="#a2a2a2" stroke-width="1.5"/><line x1="0" y1="708.68" x2="1200" y2="708.68" stroke="#a2a2a2" stroke-width="1.5"/><line x1="0" y1="737.20" x2="1200" y2="737.20" stroke="#a2a2a2" stroke-width="1.5"/><line x1="0" y1="765.72" x2="1200" y2="765.72" stroke="#a2a2a2" stroke-width="1.5"/><line x1="0" y1="794.24" x2="1200" y2="794.24" stroke="#a2a2a2" stroke-width="1.5"/><line x1="0" y1="822.76" x2="1200" y2="822.76" stroke="#a2a2a2" stroke-width="1.5"/><line x1="0" y1="851.28" x2="1200" y2="851.28" stroke="#a2a2a2" stroke-width="1.5"/><line x1="0" y1="879.80" x2="1200" y2="879.80" stroke="#a2a2a2" stroke-width="1.5"/><line x1="0" y1="908.32" x2="1200" y2="908.32" stroke="#a2a2a2" stroke-width="1.5"/><line x1="0" y1="936.84" x2="1200" y2="936.84" stroke="#a2a2a2" stroke-width="1.5"/><line x1="0" y1="965.36" x2="1200" y2="965.36" stroke="#a2a2a2" stroke-width="1.5"/><line x1="0" y1="993.88" x2="1200" y2="993.88" stroke="#a2a2a2" stroke-width="1.5"/><line x1="0" y1="1022.40" x2="1200" y2="1022.40" stroke="#a2a2a2" stroke-width="1.5"/><line x1="0" y1="1050.92" x2="1200" y2="1050.92" stroke="#a2a2a2" stroke-width="1.5"/><rect x="0" y="651.14" width="1200" height="29.52" fill="#0c77d6"/><line x1="45.75" y1="652.14" x2="45.75" y2="679.66" stroke="#4a95d8" stroke-width="1.5"/><line x1="83" y1="652.14" x2="83" y2="679.66" stroke="#4a95d8" stroke-width="1.5"/><line x1="218.5" y1="652.14" x2="218.5" y2="679.66" stroke="#4a95d8" stroke-width="1.5"/><line x1="529" y1="652.14" x2="529" y2="679.66" stroke="#4a95d8" stroke-width="1.5"/><line x1="603.5" y1="652.14" x2="603.5" y2="679.66" stroke="#4a95d8" stroke-width="1.5"/><line x1="648.7" y1="652.14" x2="648.7" y2="679.66" stroke="#4a95d8" stroke-width="1.5"/><line x1="769" y1="652.14" x2="769" y2="679.66" stroke="#4a95d8" stroke-width="1.5"/><line x1="814" y1="652.14" x2="814" y2="679.66" stroke="#4a95d8" stroke-width="1.5"/><line x1="889" y1="652.14" x2="889" y2="679.66" stroke="#4a95d8" stroke-width="1.5"/><line x1="1008.5" y1="652.14" x2="1008.5" y2="679.66" stroke="#4a95d8" stroke-width="1.5"/><line x1="1193.5" y1="652.14" x2="1193.5" y2="679.66" stroke="#4a95d8" stroke-width="1.5"/><rect x="531" y="653.54" width="70.50" height="24.72" fill="none" stroke="#fff" stroke-width="2.4"/><line x1="529" y1="651.64" x2="603.5" y2="651.64" stroke="#a2a2a2" stroke-width="1.2"/><line x1="529" y1="680.16" x2="603.5" y2="680.16" stroke="#a2a2a2" stroke-width="1.2"/><line x1="0" y1="562.8" x2="1200" y2="562.8" stroke="#ffffff" stroke-width="1.2"/><line x1="0" y1="568.1" x2="1200" y2="568.1" stroke="#fafafa" stroke-width="1.2"/><line x1="0" y1="566" x2="1200" y2="566" stroke="#4a4a4a" stroke-width="1.7"/><line x1="0.85" y1="566" x2="0.85" y2="1050.92" stroke="#5a5a5a" stroke-width="1.7"/><line x1="0" y1="1051.42" x2="1200" y2="1051.42" stroke="#8a8a8a" stroke-width="1.5"/><rect x="0" y="651.14" width="2" height="29.52" fill="#0c77d6"/></svg>
<div class="t" style="left:8.00px;top:570.00px;font-size:17.5px;color:#111;font-weight:bold;-webkit-text-stroke:0;">Nr</div>
<div class="t" style="left:90.00px;top:570.00px;font-size:17.5px;color:#111;font-weight:bold;-webkit-text-stroke:0;">Artikel</div>
<div class="t" style="left:225.50px;top:570.00px;font-size:17.5px;color:#111;font-weight:bold;-webkit-text-stroke:0;">Benämning</div>
<div class="t" style="left:529.00px;width:68.00px;top:570.00px;text-align:right;font-size:17.5px;color:#111;font-weight:bold;-webkit-text-stroke:0;">Åtgång</div>
<div class="t" style="left:610.50px;top:570.00px;font-size:17.5px;color:#111;font-weight:bold;-webkit-text-stroke:0;">Enh</div>
<div class="t" style="left:648.70px;width:113.80px;top:570.00px;text-align:right;font-size:17.5px;color:#111;font-weight:bold;-webkit-text-stroke:0;">Material</div>
<div class="t" style="left:814.00px;width:68.50px;top:570.00px;text-align:right;font-size:17.5px;color:#111;font-weight:bold;-webkit-text-stroke:0;">Tid</div>
<div class="t" style="left:889.00px;width:113.00px;top:570.00px;text-align:right;font-size:17.5px;color:#111;font-weight:bold;-webkit-text-stroke:0;">UE</div>
<div class="t" style="left:1008.50px;width:178.50px;top:570.00px;text-align:right;font-size:17.5px;color:#111;font-weight:bold;-webkit-text-stroke:0;">Summa</div>
<div class="t" style="left:1.00px;width:38.25px;top:598.56px;text-align:right;font-size:17.5px;color:#111;">1</div>
<svg style="position:absolute;left:52px;top:598.3000000000001px" width="25" height="22" viewBox="0 0 25 22">
<path d="M1.3 1 H7.8 C7.8 2.4 6.8 2.8 6.8 4.3 C6.8 6 8.2 6.9 10.1 6.9 C12 6.9 13.4 6 13.4 4.3 C13.4 2.8 12.4 2.4 12.4 1 H17.6 V5.2 C18.2 4 19.6 3.9 20.8 4.4 C23.2 5.4 24.2 8 24.2 10.6 C24.2 13.2 23.2 15.8 20.8 16.8 C19.6 17.3 18.2 17.2 17.6 16 V20.5 H12.4 C12.4 19.1 13.4 18.7 13.4 17.2 C13.4 15.5 12 14.6 10.1 14.6 C8.2 14.6 6.8 15.5 6.8 17.2 C6.8 18.7 7.8 19.1 7.8 20.5 H1.3 Z" fill="#93c9f2" stroke="#1860ad" stroke-width="1.5" stroke-linejoin="round"/>
</svg>
<div class="t" style="left:90.00px;top:598.56px;font-size:17.5px;color:#111;">#1000001 i</div>
<div class="t" style="left:225.50px;top:598.56px;font-size:17.5px;color:#111;">20 rundsvets tab 1 plåtrör</div>
<div class="t" style="left:529.00px;width:68.00px;top:598.56px;text-align:right;font-size:17.5px;color:#111;">5,00</div>
<div class="t" style="left:610.50px;top:598.56px;font-size:17.5px;color:#111;">st</div>
<div class="t" style="left:648.70px;width:113.80px;top:598.56px;text-align:right;font-size:17.5px;color:#111;">0,00</div>
<div class="t" style="left:769px;width:45px;top:598.56px;text-align:center;font-size:17.5px;color:#111">wi</div>
<div class="t" style="left:814.00px;width:68.50px;top:598.56px;text-align:right;font-size:17.5px;color:#111;">2,50</div>
<div class="t" style="left:889.00px;width:113.00px;top:598.56px;text-align:right;font-size:17.5px;color:#111;">0,00</div>
<div class="t" style="left:1008.50px;width:178.50px;top:598.56px;text-align:right;font-size:17.5px;color:#111;">1 250,00</div>
<div class="t" style="left:1.00px;width:38.25px;top:627.08px;text-align:right;font-size:17.5px;color:#111;">2</div>
<svg style="position:absolute;left:52px;top:626.82px" width="25" height="22" viewBox="0 0 25 22">
<path d="M1.3 1 H7.8 C7.8 2.4 6.8 2.8 6.8 4.3 C6.8 6 8.2 6.9 10.1 6.9 C12 6.9 13.4 6 13.4 4.3 C13.4 2.8 12.4 2.4 12.4 1 H17.6 V5.2 C18.2 4 19.6 3.9 20.8 4.4 C23.2 5.4 24.2 8 24.2 10.6 C24.2 13.2 23.2 15.8 20.8 16.8 C19.6 17.3 18.2 17.2 17.6 16 V20.5 H12.4 C12.4 19.1 13.4 18.7 13.4 17.2 C13.4 15.5 12 14.6 10.1 14.6 C8.2 14.6 6.8 15.5 6.8 17.2 C6.8 18.7 7.8 19.1 7.8 20.5 H1.3 Z" fill="#93c9f2" stroke="#1860ad" stroke-width="1.5" stroke-linejoin="round"/>
</svg>
<div class="t" style="left:90.00px;top:627.08px;font-size:17.5px;color:#111;">#1000002 i</div>
<div class="t" style="left:225.50px;top:627.08px;font-size:17.5px;color:#111;">25 rundsvets tab 1 plåtrör</div>
<div class="t" style="left:529.00px;width:68.00px;top:627.08px;text-align:right;font-size:17.5px;color:#111;">14,00</div>
<div class="t" style="left:610.50px;top:627.08px;font-size:17.5px;color:#111;">st</div>
<div class="t" style="left:648.70px;width:113.80px;top:627.08px;text-align:right;font-size:17.5px;color:#111;">0,00</div>
<div class="t" style="left:769px;width:45px;top:627.08px;text-align:center;font-size:17.5px;color:#111">wi</div>
<div class="t" style="left:814.00px;width:68.50px;top:627.08px;text-align:right;font-size:17.5px;color:#111;">7,70</div>
<div class="t" style="left:889.00px;width:113.00px;top:627.08px;text-align:right;font-size:17.5px;color:#111;">0,00</div>
<div class="t" style="left:1008.50px;width:178.50px;top:627.08px;text-align:right;font-size:17.5px;color:#111;">3 850,00</div>
<div class="t" style="left:1.00px;width:38.25px;top:655.60px;text-align:right;font-size:17.5px;color:#fff;">3</div>
<svg style="position:absolute;left:52px;top:655.34px" width="25" height="22" viewBox="0 0 25 22">
<path d="M1.3 1 H7.8 C7.8 2.4 6.8 2.8 6.8 4.3 C6.8 6 8.2 6.9 10.1 6.9 C12 6.9 13.4 6 13.4 4.3 C13.4 2.8 12.4 2.4 12.4 1 H17.6 V5.2 C18.2 4 19.6 3.9 20.8 4.4 C23.2 5.4 24.2 8 24.2 10.6 C24.2 13.2 23.2 15.8 20.8 16.8 C19.6 17.3 18.2 17.2 17.6 16 V20.5 H12.4 C12.4 19.1 13.4 18.7 13.4 17.2 C13.4 15.5 12 14.6 10.1 14.6 C8.2 14.6 6.8 15.5 6.8 17.2 C6.8 18.7 7.8 19.1 7.8 20.5 H1.3 Z" fill="#9fcff3" stroke="none" stroke-width="1.5" stroke-linejoin="round"/>
</svg>
<div class="t" style="left:90.00px;top:655.60px;font-size:17.5px;color:#fff;">#1000003 i</div>
<div class="t" style="left:225.50px;top:655.60px;font-size:17.5px;color:#fff;">32 rundsvets tab 1 plåtrör</div>
<div class="t" style="left:529.00px;width:68.00px;top:655.60px;text-align:right;font-size:17.5px;color:#fff;">10,00</div>
<div class="t" style="left:610.50px;top:655.60px;font-size:17.5px;color:#fff;">st</div>
<div class="t" style="left:648.70px;width:113.80px;top:655.60px;text-align:right;font-size:17.5px;color:#fff;">0,00</div>
<div class="t" style="left:769px;width:45px;top:655.60px;text-align:center;font-size:17.5px;color:#fff">wi</div>
<div class="t" style="left:814.00px;width:68.50px;top:655.60px;text-align:right;font-size:17.5px;color:#fff;">6,00</div>
<div class="t" style="left:889.00px;width:113.00px;top:655.60px;text-align:right;font-size:17.5px;color:#fff;">0,00</div>
<div class="t" style="left:1008.50px;width:178.50px;top:655.60px;text-align:right;font-size:17.5px;color:#fff;">3 000,00</div>
<div class="t" style="left:1.00px;width:38.25px;top:684.12px;text-align:right;font-size:17.5px;color:#111;">4</div>
<svg style="position:absolute;left:52px;top:683.8600000000001px" width="25" height="22" viewBox="0 0 25 22">
<path d="M1.3 1 H7.8 C7.8 2.4 6.8 2.8 6.8 4.3 C6.8 6 8.2 6.9 10.1 6.9 C12 6.9 13.4 6 13.4 4.3 C13.4 2.8 12.4 2.4 12.4 1 H17.6 V5.2 C18.2 4 19.6 3.9 20.8 4.4 C23.2 5.4 24.2 8 24.2 10.6 C24.2 13.2 23.2 15.8 20.8 16.8 C19.6 17.3 18.2 17.2 17.6 16 V20.5 H12.4 C12.4 19.1 13.4 18.7 13.4 17.2 C13.4 15.5 12 14.6 10.1 14.6 C8.2 14.6 6.8 15.5 6.8 17.2 C6.8 18.7 7.8 19.1 7.8 20.5 H1.3 Z" fill="#93c9f2" stroke="#1860ad" stroke-width="1.5" stroke-linejoin="round"/>
</svg>
<div class="t" style="left:90.00px;top:684.12px;font-size:17.5px;color:#111;">#1000004 i</div>
<div class="t" style="left:225.50px;top:684.12px;font-size:17.5px;color:#111;">40 rundsvets tab 1 plåtrör</div>
<div class="t" style="left:529.00px;width:68.00px;top:684.12px;text-align:right;font-size:17.5px;color:#111;">0,00</div>
<div class="t" style="left:610.50px;top:684.12px;font-size:17.5px;color:#111;">st</div>
<div class="t" style="left:648.70px;width:113.80px;top:684.12px;text-align:right;font-size:17.5px;color:#111;">0,00</div>
<div class="t" style="left:769px;width:45px;top:684.12px;text-align:center;font-size:17.5px;color:#111">wi</div>
<div class="t" style="left:814.00px;width:68.50px;top:684.12px;text-align:right;font-size:17.5px;color:#111;">0,00</div>
<div class="t" style="left:889.00px;width:113.00px;top:684.12px;text-align:right;font-size:17.5px;color:#111;">0,00</div>
<div class="t" style="left:1008.50px;width:178.50px;top:684.12px;text-align:right;font-size:17.5px;color:#111;">0,00</div>
<div class="t" style="left:1.00px;width:38.25px;top:712.64px;text-align:right;font-size:17.5px;color:#111;">5</div>
<svg style="position:absolute;left:52px;top:712.3800000000001px" width="25" height="22" viewBox="0 0 25 22">
<path d="M1.3 1 H7.8 C7.8 2.4 6.8 2.8 6.8 4.3 C6.8 6 8.2 6.9 10.1 6.9 C12 6.9 13.4 6 13.4 4.3 C13.4 2.8 12.4 2.4 12.4 1 H17.6 V5.2 C18.2 4 19.6 3.9 20.8 4.4 C23.2 5.4 24.2 8 24.2 10.6 C24.2 13.2 23.2 15.8 20.8 16.8 C19.6 17.3 18.2 17.2 17.6 16 V20.5 H12.4 C12.4 19.1 13.4 18.7 13.4 17.2 C13.4 15.5 12 14.6 10.1 14.6 C8.2 14.6 6.8 15.5 6.8 17.2 C6.8 18.7 7.8 19.1 7.8 20.5 H1.3 Z" fill="#93c9f2" stroke="#1860ad" stroke-width="1.5" stroke-linejoin="round"/>
</svg>
<div class="t" style="left:90.00px;top:712.64px;font-size:17.5px;color:#111;">#1000005 i</div>
<div class="t" style="left:225.50px;top:712.64px;font-size:17.5px;color:#111;">50 rundsvets tab 1 plåtrör</div>
<div class="t" style="left:529.00px;width:68.00px;top:712.64px;text-align:right;font-size:17.5px;color:#111;">0,00</div>
<div class="t" style="left:610.50px;top:712.64px;font-size:17.5px;color:#111;">st</div>
<div class="t" style="left:648.70px;width:113.80px;top:712.64px;text-align:right;font-size:17.5px;color:#111;">0,00</div>
<div class="t" style="left:769px;width:45px;top:712.64px;text-align:center;font-size:17.5px;color:#111">wi</div>
<div class="t" style="left:814.00px;width:68.50px;top:712.64px;text-align:right;font-size:17.5px;color:#111;">0,00</div>
<div class="t" style="left:889.00px;width:113.00px;top:712.64px;text-align:right;font-size:17.5px;color:#111;">0,00</div>
<div class="t" style="left:1008.50px;width:178.50px;top:712.64px;text-align:right;font-size:17.5px;color:#111;">0,00</div>
<div class="t" style="left:1.00px;width:38.25px;top:741.16px;text-align:right;font-size:17.5px;color:#111;">6</div>
<svg style="position:absolute;left:52px;top:740.9000000000001px" width="25" height="22" viewBox="0 0 25 22">
<path d="M1.3 1 H7.8 C7.8 2.4 6.8 2.8 6.8 4.3 C6.8 6 8.2 6.9 10.1 6.9 C12 6.9 13.4 6 13.4 4.3 C13.4 2.8 12.4 2.4 12.4 1 H17.6 V5.2 C18.2 4 19.6 3.9 20.8 4.4 C23.2 5.4 24.2 8 24.2 10.6 C24.2 13.2 23.2 15.8 20.8 16.8 C19.6 17.3 18.2 17.2 17.6 16 V20.5 H12.4 C12.4 19.1 13.4 18.7 13.4 17.2 C13.4 15.5 12 14.6 10.1 14.6 C8.2 14.6 6.8 15.5 6.8 17.2 C6.8 18.7 7.8 19.1 7.8 20.5 H1.3 Z" fill="#93c9f2" stroke="#1860ad" stroke-width="1.5" stroke-linejoin="round"/>
</svg>
<div class="t" style="left:90.00px;top:741.16px;font-size:17.5px;color:#111;">#1000006 i</div>
<div class="t" style="left:225.50px;top:741.16px;font-size:17.5px;color:#111;">65 rundsvets tab 1 plåtrör</div>
<div class="t" style="left:529.00px;width:68.00px;top:741.16px;text-align:right;font-size:17.5px;color:#111;">0,00</div>
<div class="t" style="left:610.50px;top:741.16px;font-size:17.5px;color:#111;">st</div>
<div class="t" style="left:648.70px;width:113.80px;top:741.16px;text-align:right;font-size:17.5px;color:#111;">0,00</div>
<div class="t" style="left:769px;width:45px;top:741.16px;text-align:center;font-size:17.5px;color:#111">wi</div>
<div class="t" style="left:814.00px;width:68.50px;top:741.16px;text-align:right;font-size:17.5px;color:#111;">0,00</div>
<div class="t" style="left:889.00px;width:113.00px;top:741.16px;text-align:right;font-size:17.5px;color:#111;">0,00</div>
<div class="t" style="left:1008.50px;width:178.50px;top:741.16px;text-align:right;font-size:17.5px;color:#111;">0,00</div>
<div class="t" style="left:1.00px;width:38.25px;top:769.68px;text-align:right;font-size:17.5px;color:#111;">7</div>
<svg style="position:absolute;left:52px;top:769.4200000000001px" width="25" height="22" viewBox="0 0 25 22">
<path d="M1.3 1 H7.8 C7.8 2.4 6.8 2.8 6.8 4.3 C6.8 6 8.2 6.9 10.1 6.9 C12 6.9 13.4 6 13.4 4.3 C13.4 2.8 12.4 2.4 12.4 1 H17.6 V5.2 C18.2 4 19.6 3.9 20.8 4.4 C23.2 5.4 24.2 8 24.2 10.6 C24.2 13.2 23.2 15.8 20.8 16.8 C19.6 17.3 18.2 17.2 17.6 16 V20.5 H12.4 C12.4 19.1 13.4 18.7 13.4 17.2 C13.4 15.5 12 14.6 10.1 14.6 C8.2 14.6 6.8 15.5 6.8 17.2 C6.8 18.7 7.8 19.1 7.8 20.5 H1.3 Z" fill="#93c9f2" stroke="#1860ad" stroke-width="1.5" stroke-linejoin="round"/>
</svg>
<div class="t" style="left:90.00px;top:769.68px;font-size:17.5px;color:#111;">#1000007 i</div>
<div class="t" style="left:225.50px;top:769.68px;font-size:17.5px;color:#111;">80 rundsvets tab 1 plåtrör</div>
<div class="t" style="left:529.00px;width:68.00px;top:769.68px;text-align:right;font-size:17.5px;color:#111;">0,00</div>
<div class="t" style="left:610.50px;top:769.68px;font-size:17.5px;color:#111;">st</div>
<div class="t" style="left:648.70px;width:113.80px;top:769.68px;text-align:right;font-size:17.5px;color:#111;">0,00</div>
<div class="t" style="left:769px;width:45px;top:769.68px;text-align:center;font-size:17.5px;color:#111">wi</div>
<div class="t" style="left:814.00px;width:68.50px;top:769.68px;text-align:right;font-size:17.5px;color:#111;">0,00</div>
<div class="t" style="left:889.00px;width:113.00px;top:769.68px;text-align:right;font-size:17.5px;color:#111;">0,00</div>
<div class="t" style="left:1008.50px;width:178.50px;top:769.68px;text-align:right;font-size:17.5px;color:#111;">0,00</div>
<div class="t" style="left:1.00px;width:38.25px;top:798.20px;text-align:right;font-size:17.5px;color:#111;">8</div>
<svg style="position:absolute;left:52px;top:797.94px" width="25" height="22" viewBox="0 0 25 22">
<path d="M1.3 1 H7.8 C7.8 2.4 6.8 2.8 6.8 4.3 C6.8 6 8.2 6.9 10.1 6.9 C12 6.9 13.4 6 13.4 4.3 C13.4 2.8 12.4 2.4 12.4 1 H17.6 V5.2 C18.2 4 19.6 3.9 20.8 4.4 C23.2 5.4 24.2 8 24.2 10.6 C24.2 13.2 23.2 15.8 20.8 16.8 C19.6 17.3 18.2 17.2 17.6 16 V20.5 H12.4 C12.4 19.1 13.4 18.7 13.4 17.2 C13.4 15.5 12 14.6 10.1 14.6 C8.2 14.6 6.8 15.5 6.8 17.2 C6.8 18.7 7.8 19.1 7.8 20.5 H1.3 Z" fill="#93c9f2" stroke="#1860ad" stroke-width="1.5" stroke-linejoin="round"/>
</svg>
<div class="t" style="left:90.00px;top:798.20px;font-size:17.5px;color:#111;">#1000008 i</div>
<div class="t" style="left:225.50px;top:798.20px;font-size:17.5px;color:#111;">100 rundsvets tab 1 plåtrör</div>
<div class="t" style="left:529.00px;width:68.00px;top:798.20px;text-align:right;font-size:17.5px;color:#111;">0,00</div>
<div class="t" style="left:610.50px;top:798.20px;font-size:17.5px;color:#111;">st</div>
<div class="t" style="left:648.70px;width:113.80px;top:798.20px;text-align:right;font-size:17.5px;color:#111;">0,00</div>
<div class="t" style="left:769px;width:45px;top:798.20px;text-align:center;font-size:17.5px;color:#111">wi</div>
<div class="t" style="left:814.00px;width:68.50px;top:798.20px;text-align:right;font-size:17.5px;color:#111;">0,00</div>
<div class="t" style="left:889.00px;width:113.00px;top:798.20px;text-align:right;font-size:17.5px;color:#111;">0,00</div>
<div class="t" style="left:1008.50px;width:178.50px;top:798.20px;text-align:right;font-size:17.5px;color:#111;">0,00</div>
<div class="t" style="left:1.00px;width:38.25px;top:826.72px;text-align:right;font-size:17.5px;color:#111;">9</div>
<svg style="position:absolute;left:52px;top:826.46px" width="25" height="22" viewBox="0 0 25 22">
<path d="M1.3 1 H7.8 C7.8 2.4 6.8 2.8 6.8 4.3 C6.8 6 8.2 6.9 10.1 6.9 C12 6.9 13.4 6 13.4 4.3 C13.4 2.8 12.4 2.4 12.4 1 H17.6 V5.2 C18.2 4 19.6 3.9 20.8 4.4 C23.2 5.4 24.2 8 24.2 10.6 C24.2 13.2 23.2 15.8 20.8 16.8 C19.6 17.3 18.2 17.2 17.6 16 V20.5 H12.4 C12.4 19.1 13.4 18.7 13.4 17.2 C13.4 15.5 12 14.6 10.1 14.6 C8.2 14.6 6.8 15.5 6.8 17.2 C6.8 18.7 7.8 19.1 7.8 20.5 H1.3 Z" fill="#93c9f2" stroke="#1860ad" stroke-width="1.5" stroke-linejoin="round"/>
</svg>
<div class="t" style="left:90.00px;top:826.72px;font-size:17.5px;color:#111;">#1000009 i</div>
<div class="t" style="left:225.50px;top:826.72px;font-size:17.5px;color:#111;">125 rundsvets tab 1 plåtrör</div>
<div class="t" style="left:529.00px;width:68.00px;top:826.72px;text-align:right;font-size:17.5px;color:#111;">0,00</div>
<div class="t" style="left:610.50px;top:826.72px;font-size:17.5px;color:#111;">st</div>
<div class="t" style="left:648.70px;width:113.80px;top:826.72px;text-align:right;font-size:17.5px;color:#111;">0,00</div>
<div class="t" style="left:769px;width:45px;top:826.72px;text-align:center;font-size:17.5px;color:#111">wi</div>
<div class="t" style="left:814.00px;width:68.50px;top:826.72px;text-align:right;font-size:17.5px;color:#111;">0,00</div>
<div class="t" style="left:889.00px;width:113.00px;top:826.72px;text-align:right;font-size:17.5px;color:#111;">0,00</div>
<div class="t" style="left:1008.50px;width:178.50px;top:826.72px;text-align:right;font-size:17.5px;color:#111;">0,00</div>
<div class="t" style="left:1.00px;width:38.25px;top:855.24px;text-align:right;font-size:17.5px;color:#111;">10</div>
<svg style="position:absolute;left:52px;top:854.98px" width="25" height="22" viewBox="0 0 25 22">
<path d="M1.3 1 H7.8 C7.8 2.4 6.8 2.8 6.8 4.3 C6.8 6 8.2 6.9 10.1 6.9 C12 6.9 13.4 6 13.4 4.3 C13.4 2.8 12.4 2.4 12.4 1 H17.6 V5.2 C18.2 4 19.6 3.9 20.8 4.4 C23.2 5.4 24.2 8 24.2 10.6 C24.2 13.2 23.2 15.8 20.8 16.8 C19.6 17.3 18.2 17.2 17.6 16 V20.5 H12.4 C12.4 19.1 13.4 18.7 13.4 17.2 C13.4 15.5 12 14.6 10.1 14.6 C8.2 14.6 6.8 15.5 6.8 17.2 C6.8 18.7 7.8 19.1 7.8 20.5 H1.3 Z" fill="#93c9f2" stroke="#1860ad" stroke-width="1.5" stroke-linejoin="round"/>
</svg>
<div class="t" style="left:90.00px;top:855.24px;font-size:17.5px;color:#111;">#1000010 i</div>
<div class="t" style="left:225.50px;top:855.24px;font-size:17.5px;color:#111;">150 rundsvets tab 1 plåtrör</div>
<div class="t" style="left:529.00px;width:68.00px;top:855.24px;text-align:right;font-size:17.5px;color:#111;">0,00</div>
<div class="t" style="left:610.50px;top:855.24px;font-size:17.5px;color:#111;">st</div>
<div class="t" style="left:648.70px;width:113.80px;top:855.24px;text-align:right;font-size:17.5px;color:#111;">0,00</div>
<div class="t" style="left:769px;width:45px;top:855.24px;text-align:center;font-size:17.5px;color:#111">wi</div>
<div class="t" style="left:814.00px;width:68.50px;top:855.24px;text-align:right;font-size:17.5px;color:#111;">0,00</div>
<div class="t" style="left:889.00px;width:113.00px;top:855.24px;text-align:right;font-size:17.5px;color:#111;">0,00</div>
<div class="t" style="left:1008.50px;width:178.50px;top:855.24px;text-align:right;font-size:17.5px;color:#111;">0,00</div>
<div class="t" style="left:1.00px;width:38.25px;top:883.76px;text-align:right;font-size:17.5px;color:#111;">11</div>
<svg style="position:absolute;left:52px;top:883.5px" width="25" height="22" viewBox="0 0 25 22">
<path d="M1.3 1 H7.8 C7.8 2.4 6.8 2.8 6.8 4.3 C6.8 6 8.2 6.9 10.1 6.9 C12 6.9 13.4 6 13.4 4.3 C13.4 2.8 12.4 2.4 12.4 1 H17.6 V5.2 C18.2 4 19.6 3.9 20.8 4.4 C23.2 5.4 24.2 8 24.2 10.6 C24.2 13.2 23.2 15.8 20.8 16.8 C19.6 17.3 18.2 17.2 17.6 16 V20.5 H12.4 C12.4 19.1 13.4 18.7 13.4 17.2 C13.4 15.5 12 14.6 10.1 14.6 C8.2 14.6 6.8 15.5 6.8 17.2 C6.8 18.7 7.8 19.1 7.8 20.5 H1.3 Z" fill="#93c9f2" stroke="#1860ad" stroke-width="1.5" stroke-linejoin="round"/>
</svg>
<div class="t" style="left:90.00px;top:883.76px;font-size:17.5px;color:#111;">#1000011 i</div>
<div class="t" style="left:225.50px;top:883.76px;font-size:17.5px;color:#111;">200 rundsvets tab 1 plåtrör</div>
<div class="t" style="left:529.00px;width:68.00px;top:883.76px;text-align:right;font-size:17.5px;color:#111;">0,00</div>
<div class="t" style="left:610.50px;top:883.76px;font-size:17.5px;color:#111;">st</div>
<div class="t" style="left:648.70px;width:113.80px;top:883.76px;text-align:right;font-size:17.5px;color:#111;">0,00</div>
<div class="t" style="left:769px;width:45px;top:883.76px;text-align:center;font-size:17.5px;color:#111">wi</div>
<div class="t" style="left:814.00px;width:68.50px;top:883.76px;text-align:right;font-size:17.5px;color:#111;">0,00</div>
<div class="t" style="left:889.00px;width:113.00px;top:883.76px;text-align:right;font-size:17.5px;color:#111;">0,00</div>
<div class="t" style="left:1008.50px;width:178.50px;top:883.76px;text-align:right;font-size:17.5px;color:#111;">0,00</div>
<div class="t" style="left:225.50px;top:912.28px;font-size:17.5px;color:#111;font-weight:bold;-webkit-text-stroke:0;">Summa:</div>
<div class="t" style="left:648.70px;width:113.80px;top:912.28px;text-align:right;font-size:17.5px;color:#111;font-weight:bold;-webkit-text-stroke:0;">0,00</div>
<div class="t" style="left:814.00px;width:68.50px;top:912.28px;text-align:right;font-size:17.5px;color:#111;font-weight:bold;-webkit-text-stroke:0;">16,20</div>
<div class="t" style="left:889.00px;width:113.00px;top:912.28px;text-align:right;font-size:17.5px;color:#111;font-weight:bold;-webkit-text-stroke:0;">0,00</div>
<div class="t" style="left:1008.50px;width:178.50px;top:912.28px;text-align:right;font-size:17.5px;color:#111;font-weight:bold;-webkit-text-stroke:0;">8 100,00</div>
<div class="t" style="left:225.50px;top:940.80px;font-size:17.5px;color:#111;font-weight:bold;-webkit-text-stroke:0;">Omkostnadspåslag:</div>
<div class="t" style="left:1008.50px;width:178.50px;top:940.80px;text-align:right;font-size:17.5px;color:#111;font-weight:bold;-webkit-text-stroke:0;">23 733,00</div>
<div class="t" style="left:225.50px;top:969.32px;font-size:17.5px;color:#111;font-weight:bold;-webkit-text-stroke:0;">Sektionskostnad:</div>
<div class="t" style="left:889.00px;width:113.00px;top:969.32px;text-align:right;font-size:17.5px;color:#111;font-weight:bold;-webkit-text-stroke:0;">SEK/st</div>
<div class="t" style="left:1008.50px;width:178.50px;top:969.32px;text-align:right;font-size:17.5px;color:#111;font-weight:bold;-webkit-text-stroke:0;">31 833,00</div>
<div class="t" style="left:225.50px;top:1026.36px;font-size:17.5px;color:#111;font-weight:bold;-webkit-text-stroke:0;">Totalt inkl omkostnader:</div>
<div class="t" style="left:529.00px;width:68.00px;top:1026.36px;text-align:right;font-size:17.5px;color:#111;">1,00</div>
<div class="t" style="left:610.50px;top:1026.36px;font-size:17.5px;color:#111;">st</div>
<div class="t" style="left:648.70px;width:113.80px;top:1026.36px;text-align:right;font-size:17.5px;color:#111;font-weight:bold;-webkit-text-stroke:0;">0,00</div>
<div class="t" style="left:814.00px;width:68.50px;top:1026.36px;text-align:right;font-size:17.5px;color:#111;font-weight:bold;-webkit-text-stroke:0;">16,20</div>
<div class="t" style="left:889.00px;width:113.00px;top:1026.36px;text-align:right;font-size:17.5px;color:#111;font-weight:bold;-webkit-text-stroke:0;">0,00</div>
<div class="t" style="left:1008.50px;width:178.50px;top:1026.36px;text-align:right;font-size:17.5px;color:#111;font-weight:bold;-webkit-text-stroke:0;">31 833,00</div>
<div style="position:absolute;box-sizing:border-box;left:0px;top:1051.5px;width:1200px;height:119.5px;background:#ababab"></div>
<div style="position:absolute;box-sizing:border-box;left:0px;top:1169.5px;width:1200px;height:1.5px;background:#9a9a9a"></div>
<div style="position:absolute;box-sizing:border-box;left:0px;top:1171px;width:1200px;height:22.5px;background:#fff"></div>
<div style="position:absolute;box-sizing:border-box;left:0px;top:1193.5px;width:1200px;height:7px;background:#f0f0f0"></div>
<div style="position:absolute;box-sizing:border-box;left:27px;top:1176px;width:603px;height:13px;background:#8a8a8a;border-radius:6.5px"></div>
<svg style="position:absolute;left:6px;top:1176px" width="12" height="14" viewBox="0 0 12 14"><path d="M10.5 1 V13 L1.5 7 Z" fill="#8a8a8a" stroke="#8a8a8a" stroke-width="1.2" stroke-linejoin="round"/></svg>
</body></html>
